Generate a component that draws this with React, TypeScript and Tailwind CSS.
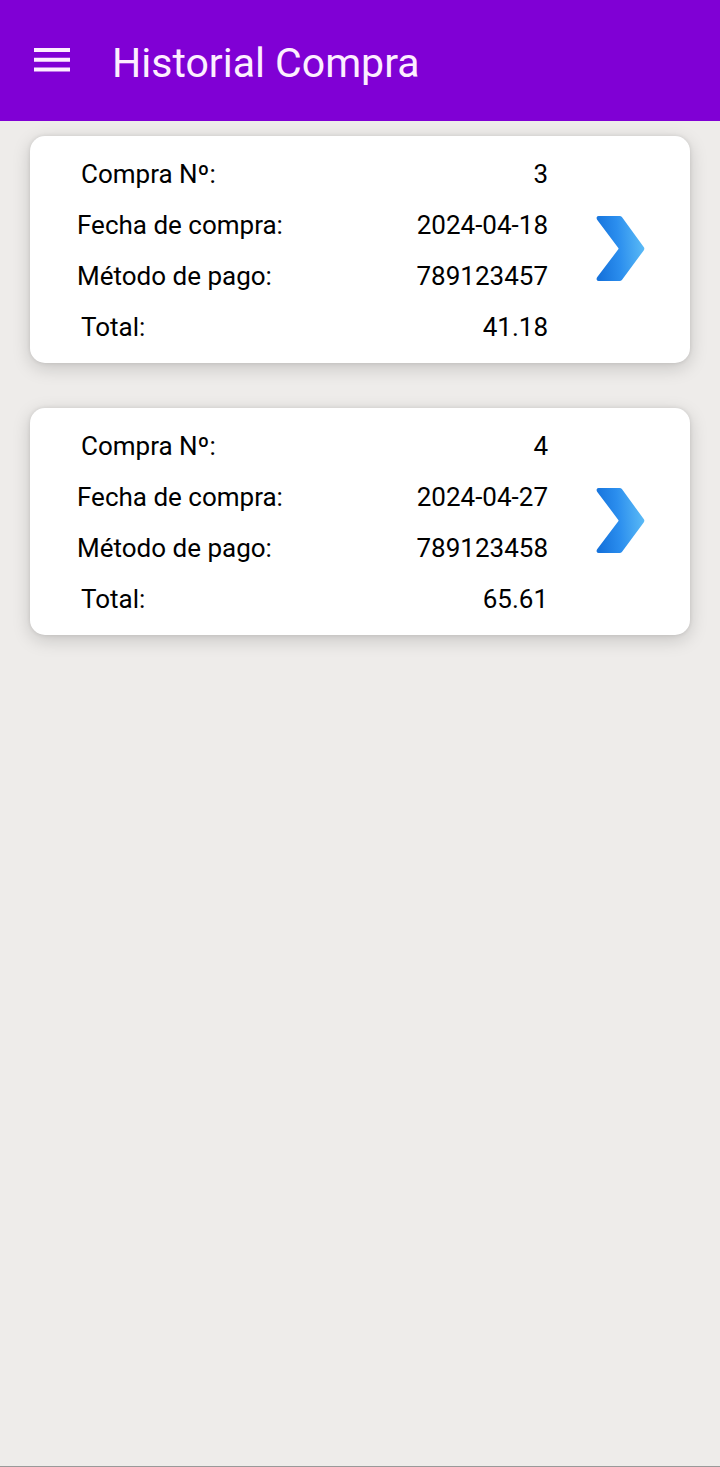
import { useId } from "react";

type Purchase = { id: number; date: string; payment: string; total: string };

const purchases: Purchase[] = [
  { id: 3, date: "2024-04-18", payment: "789123457", total: "41.18" },
  { id: 4, date: "2024-04-27", payment: "789123458", total: "65.61" },
];

function Row({ label, value, inset = false }: { label: string; value: string | number; inset?: boolean }) {
  return (
    <div className="flex h-[51px] items-center justify-between">
      <dt className={inset ? "pl-1" : ""}>{label}</dt>
      <dd>{value}</dd>
    </div>
  );
}

function Chevron() {
  const id = useId();
  return (
    <svg viewBox="0 0 49 66" className="h-[66px] w-[49px]" aria-hidden="true">
      <defs>
        <linearGradient id={id} gradientUnits="userSpaceOnUse" x1="2" y1="35" x2="48" y2="31">
          <stop offset="0" stopColor="#1673dc" />
          <stop offset="0.45" stopColor="#2b8eee" />
          <stop offset="1" stopColor="#5abaf6" />
        </linearGradient>
      </defs>
      <path
        d="M2.6 0H23.6Q25 0 25.9 1.1L47.7 31Q49 32.7 47.7 34.4L25.9 63.9Q25 65 23.6 65H2.6C.5 65 0 62.7 1.3 61.1L22.3 33.3Q22.8 32.6 22.3 31.9L1.3 3.9C0 2.2.6 0 2.6 0Z"
        fill={`url(#${id})`}
      />
    </svg>
  );
}

function PurchaseCard({ purchase }: { purchase: Purchase }) {
  return (
    <li className="flex items-center rounded-[15px] bg-white px-[45px] pt-3 pb-[11px] shadow-[0_5px_18px_rgba(0,0,0,0.17),0_0_4px_rgba(0,0,0,0.1)]">
      <dl className="flex-1 pr-[2px] pl-[2px] text-[26px] leading-8 text-black">
        <Row label="Compra Nº:" value={purchase.id} inset />
        <Row label="Fecha de compra:" value={purchase.date} />
        <Row label="Método de pago:" value={purchase.payment} />
        <Row label="Total:" value={purchase.total} inset />
      </dl>
      <button type="button" aria-label="Ver compra" className="ml-[46px] pb-[2px]">
        <Chevron />
      </button>
    </li>
  );
}

export default function App() {
  return (
    <div className="flex min-h-screen flex-col border-b border-[#999] bg-[#eeecea] font-[Roboto,sans-serif]">
      <header className="flex h-[121px] items-center gap-[42px] bg-[#8000d5] pl-[34px] text-[#fdeeff]">
        <button type="button" aria-label="Abrir menú" className="pb-[2px]">
          <svg viewBox="0 0 36 24" className="block h-6 w-9" fill="currentColor" aria-hidden="true">
            <path d="M0 0H36V4H0ZM0 9.800H36V13.800H0ZM0 19.600H36V23.600H0Z" />
          </svg>
        </button>
        <h1 className="pt-1 text-[41px] leading-[48px]">Historial Compra</h1>
      </header>
      <main className="flex-1 px-[30px] pt-[15px]">
        <ul className="flex flex-col gap-[45px]">
          {purchases.map((purchase) => (
            <PurchaseCard key={purchase.id} purchase={purchase} />
          ))}
        </ul>
      </main>
    </div>
  );
}
